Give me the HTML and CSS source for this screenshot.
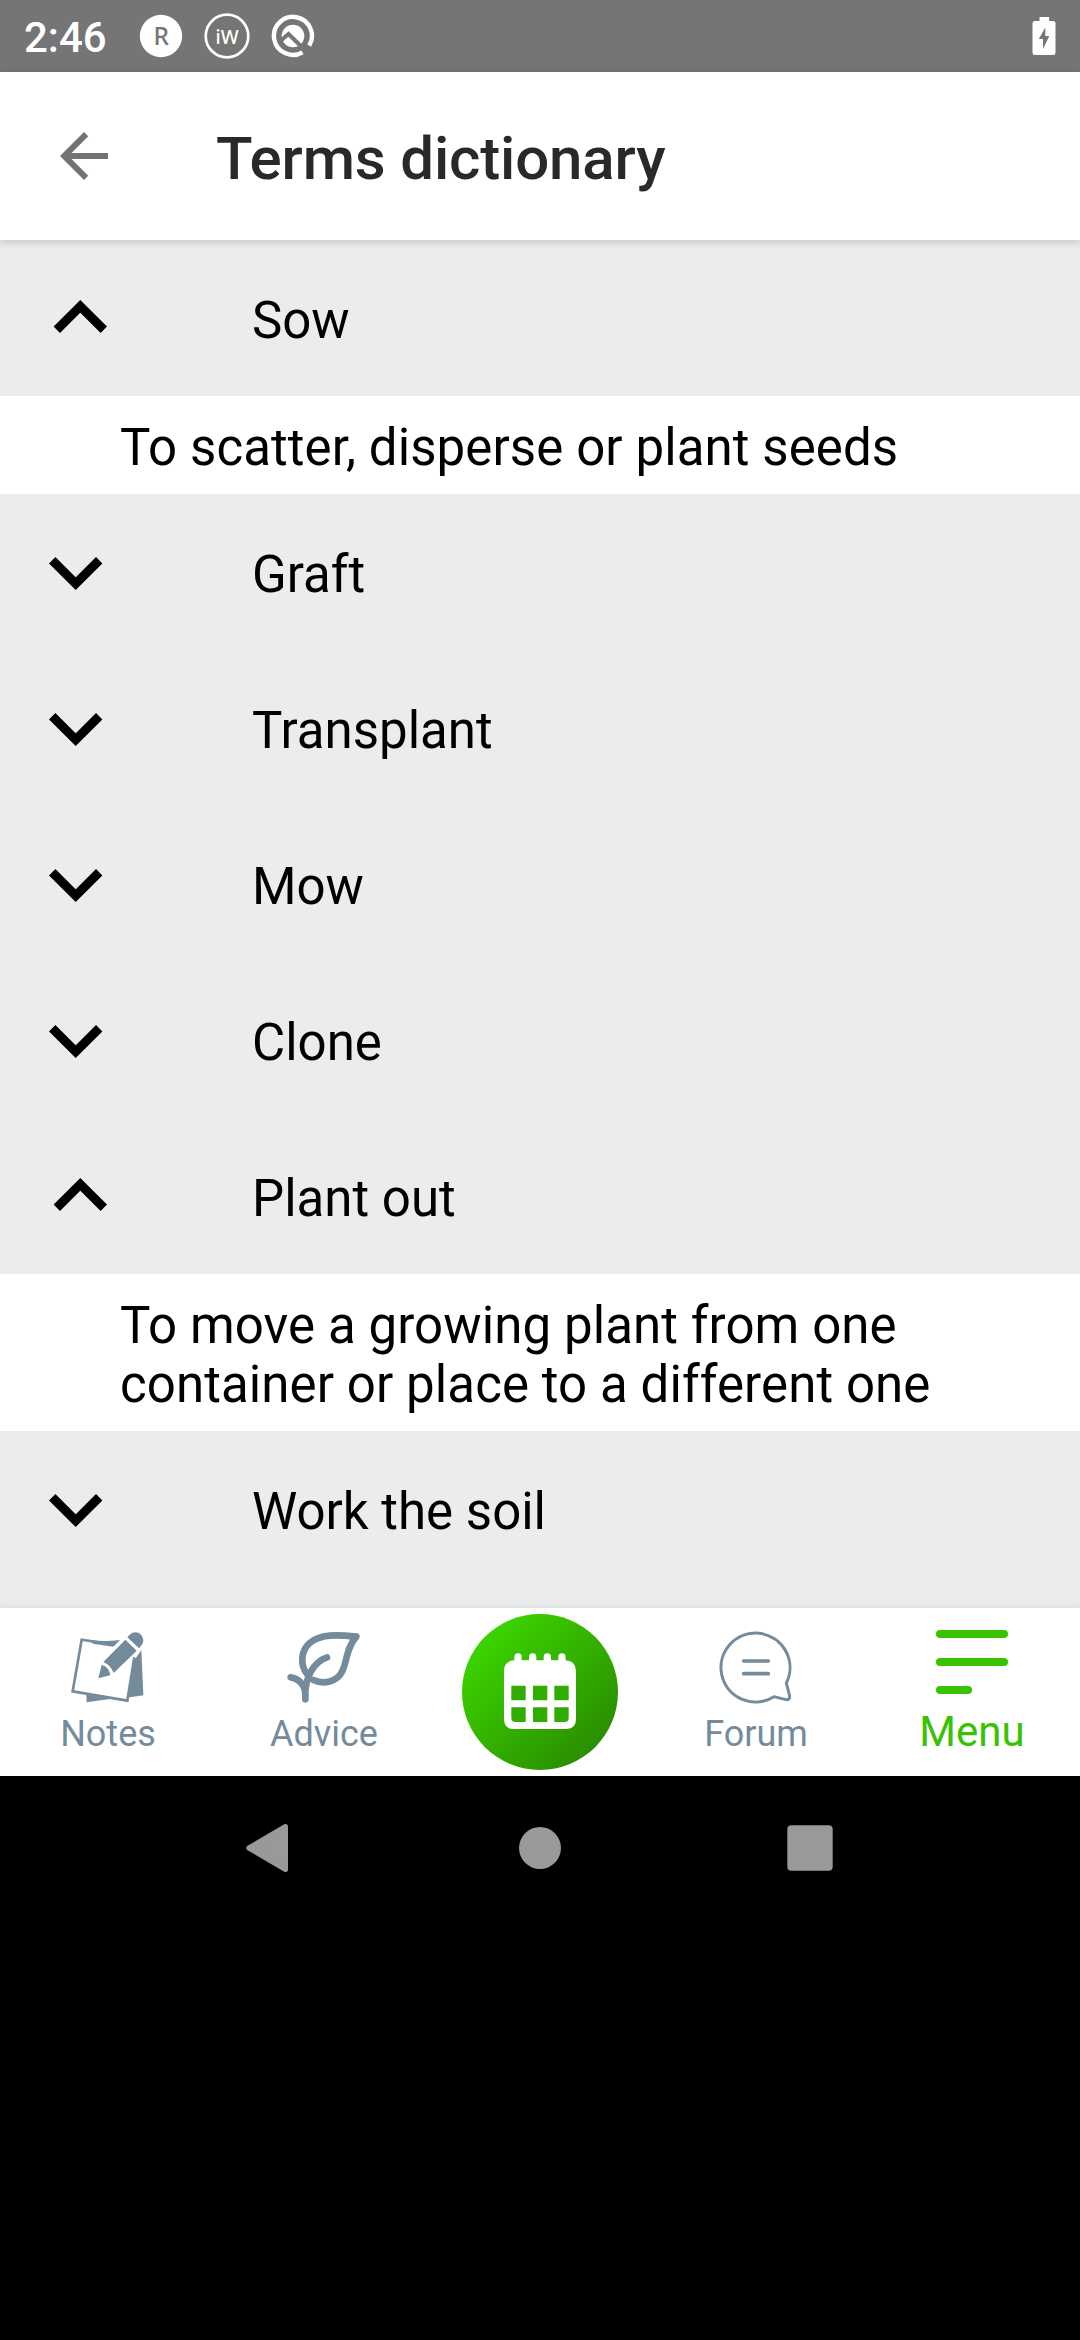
FILE: index.html
```html
<!DOCTYPE html>
<html lang="en">
<head>
<meta charset="utf-8">
<title>Terms dictionary</title>
<link rel="stylesheet" href="styles.css">
</head>
<body>
<svg width="0" height="0" class="defs" aria-hidden="true">
  <symbol id="up" viewBox="0 0 60 40"><path d="M6.800 31.800 30.300 8.300l23.500 23.500" fill="none" stroke="#000" stroke-width="9"/></symbol>
  <symbol id="down" viewBox="0 0 60 40"><path d="M7.200 8.200l23.500 23.500L54.200 8.200" fill="none" stroke="#000" stroke-width="9"/></symbol>
</svg>
<div class="screen">
  <div class="status">
    <span class="clock">2:46</span>
    <svg class="st-icon r" viewBox="0 0 46 46"><circle cx="23" cy="23" r="21.2" fill="#fff"/><text x="15.500" y="31.500" class="glyph-r">R</text></svg>
    <svg class="st-icon iw" viewBox="0 0 46 46"><circle cx="23" cy="23" r="21.3" fill="none" stroke="#fff" stroke-width="2.7"/><text x="23" y="30.500" text-anchor="middle" textLength="23" lengthAdjust="spacingAndGlyphs" class="glyph-iw">iW</text></svg>
    <svg class="st-icon q" viewBox="0 0 46 46"><path d="M32.500 39.300A19 19 0 1 1 39.200 32.700" fill="none" stroke="#fff" stroke-width="4.400"/><circle cx="23" cy="23" r="11.300" fill="#fff"/><path d="M11 27.500l7.500-6.500L40 42" fill="none" stroke="#757575" stroke-width="4"/></svg>
    <svg class="battery" viewBox="0 0 24 40"><path d="M7.500 1h9.600v4H21q2.500 0 2.500 2.500v29q0 2.500-2.500 2.500H3Q.5 39 .5 36.500v-29Q.5 5 3 5h4.500z" fill="#fff"/><path d="M13.300 11.500V20h4L11 33v-10H6.800z" fill="#757575"/></svg>
  </div>
  <header class="header">
    <svg class="back" viewBox="0 0 24 24"><path d="M20 11H7.830l5.590-5.590L12 4l-8 8 8 8 1.410-1.410L7.830 13H20z" fill="#737373"/></svg>
    <h1 class="title">Terms dictionary</h1>
  </header>
  <main class="list">
    <div class="term open"><svg class="chev"><use href="#up"/></svg><span>Sow</span></div>
    <p class="meaning">To scatter, disperse or plant seeds</p>
    <div class="term"><svg class="chev"><use href="#down"/></svg><span>Graft</span></div>
    <div class="term"><svg class="chev"><use href="#down"/></svg><span>Transplant</span></div>
    <div class="term"><svg class="chev"><use href="#down"/></svg><span>Mow</span></div>
    <div class="term"><svg class="chev"><use href="#down"/></svg><span>Clone</span></div>
    <div class="term open"><svg class="chev"><use href="#up"/></svg><span>Plant out</span></div>
    <p class="meaning">To move a growing plant from one<br>container or place to a different one</p>
    <div class="term"><svg class="chev"><use href="#down"/></svg><span>Work the soil</span></div>
  </main>
  <nav class="tabs">
    <a class="tab">
      <svg class="tab-icon" viewBox="92 122 228 228">
        <g fill="#748b9c">
          <path d="M158 153q42 4 84-1l-20 20-62-9z"/>
          <path d="M306 182l6 136-50 7 20-108z"/>
          <path d="M141 316l76 12-75 11z"/>
        </g>
        <path d="M222 166L127 151 100 306l164 28 21-130" fill="none" stroke="#748b9c" stroke-width="8"/>
        <path d="M172 271L184 214 262 137 304 180 224 262z" fill="#fff"/>
        <g fill="#748b9c">
          <path d="M264 144l7-8a24 24 0 0 1 34 34l-6 7z"/>
          <path d="M258 151l34 33-69 67q-8-23-31-33z"/>
          <path d="M187 226q22 7 26 32l-36 9z"/>
        </g>
      </svg>
      <span>Notes</span>
    </a>
    <a class="tab">
      <svg class="tab-icon" viewBox="740 122 228 228"><g fill="none" stroke="#748b9c" stroke-width="20" stroke-linecap="round" stroke-linejoin="round"><path d="M798 330v-24c4-48 26-88 65-102M798 322c2-30-16-54-44-58"/><path d="M803 254c-22-28-18-70 8-93 32-28 82-25 140-19-30 32-27 72-42 103-16 34-57 41-87 27"/></g></svg>
      <span>Advice</span>
    </a>
    <a class="tab main">
      <span class="disc">
        <svg class="cal" viewBox="0 0 216 230"><path d="M31 22V12a11 11 0 0 1 22 0v10h22V12a11 11 0 0 1 22 0v10h22V12a11 11 0 0 1 22 0v10h22V12a11 11 0 0 1 22 0v10q31 2 31 32v144q0 30-30 30H30Q0 228 0 198V54Q0 24 31 22z" fill="#fff"/><path d="M22 98h43v44H22zM87 98h43v44H87zM151 98h43v44h-43zM22 163h43v44H34q-12 0-12-12zM87 163h43v44H87zM151 163h43v32q0 12-12 12h-31z" fill="#33ac00"/></svg>
      </span>
    </a>
    <a class="tab">
      <svg class="tab-icon" viewBox="114 122 228 228"><g fill="none" stroke="#748b9c" stroke-width="9" stroke-linecap="round" stroke-linejoin="round"><path d="M319 281A103.500 103.500 0 1 0 282 322L318 331q12 1 11-11z"/><path d="M191 215h74M191 253h74" stroke-width="11"/></g></svg>
      <span>Forum</span>
    </a>
    <a class="tab active">
      <svg class="menu-icon" viewBox="0 0 72 64"><path d="M4 4h64M4 32h64M4 60h28" stroke="#38c200" stroke-width="8" stroke-linecap="round"/></svg>
      <span>Menu</span>
    </a>
  </nav>
  <div class="sysnav">
    <svg viewBox="0 0 60 60"><path d="M8.800 30L45.500 8.500v43z" fill="#999" stroke="#999" stroke-width="5" stroke-linejoin="round"/></svg>
    <svg viewBox="0 0 60 60"><circle cx="30" cy="30" r="21" fill="#999"/></svg>
    <svg viewBox="0 0 60 60"><rect x="7.300" y="7.300" width="45.400" height="45.400" rx="4" fill="#999"/></svg>
  </div>
</div>
</body>
</html>
```
FILE: styles.css
```css
body {
  margin: 0;
  background: #000;
  font-family: Roboto, sans-serif;
}
.defs { display: block; }
.screen {
  width: 1080px;
  height: 2340px;
  display: flex;
  flex-direction: column;
  overflow: hidden;
  background: #000;
}
.status {
  height: 72px;
  flex: none;
  display: flex;
  align-items: center;
  background: #757575;
  color: #fff;
}
.clock {
  width: 114px;
  padding: 3px 0 0 24px;
  font-size: 42px;
  line-height: 50px;
  font-weight: 500;
}
.st-icon { width: 46px; height: 46px; margin-right: 20px; }
.iw { margin-top: -1px; }
.glyph-r { font: 500 24.5px "Noto Sans", sans-serif; fill: #757575; }
.glyph-iw { font: 500 20.5px "Noto Sans", sans-serif; fill: #fff; }
.battery { width: 24px; height: 40px; margin-left: auto; margin-right: 24px; }
.header {
  height: 168px;
  flex: none;
  display: flex;
  align-items: center;
  background: #fff;
  position: relative;
  box-shadow: 0 2px 8px rgba(0, 0, 0, .18);
}
.back { width: 72px; height: 72px; margin-left: 48px; }
.title {
  margin: 5px 0 0 96px;
  font-size: 60px;
  line-height: 70px;
  font-weight: 500;
  letter-spacing: -.15px;
  color: #292929;
}
.list {
  height: 1368px;
  flex: none;
  overflow: hidden;
  background: #eaedec;
  font-size: 51px;
  color: #000;
}
.term {
  height: 156px;
  box-sizing: border-box;
  display: flex;
  align-items: center;
  padding-left: 45px;
}
.open { padding-left: 50px; }
.chev { width: 60px; height: 40px; }
.term span { margin-left: 147px; padding-top: 5px; line-height: 60px; }
.open span { margin-left: 142px; }
.meaning {
  margin: 0;
  padding: 22px 0 17px 120px;
  background: #fff;
  line-height: 59px;
  letter-spacing: .09px;
}
.tabs {
  height: 168px;
  flex: none;
  display: grid;
  grid-template-columns: repeat(5, 216px);
  background: #fff;
  position: relative;
  box-shadow: 0 -1px 6px rgba(0, 0, 0, .08);
}
.tab {
  display: flex;
  flex-direction: column;
  align-items: center;
  padding-top: 22px;
  color: #748b9c;
  font-size: 36px;
  line-height: 42px;
}
.tab-icon { width: 76px; height: 76px; margin-bottom: 7px; }
.main { padding-top: 6px; }
.disc {
  width: 156px;
  height: 156px;
  border-radius: 50%;
  display: flex;
  justify-content: center;
  background: linear-gradient(135deg, #3eda00 8%, #278500 95%);
}
.cal { width: 72px; height: 76.7px; margin-top: 38.5px; }
.active { color: #38c200; font-size: 42px; line-height: 50px; }
.menu-icon { width: 72px; height: 64px; margin-bottom: 13px; }
.sysnav {
  height: 144px;
  flex: none;
  display: flex;
  justify-content: center;
  align-items: center;
  gap: 210px;
}
.sysnav svg { width: 60px; height: 60px; }
```
